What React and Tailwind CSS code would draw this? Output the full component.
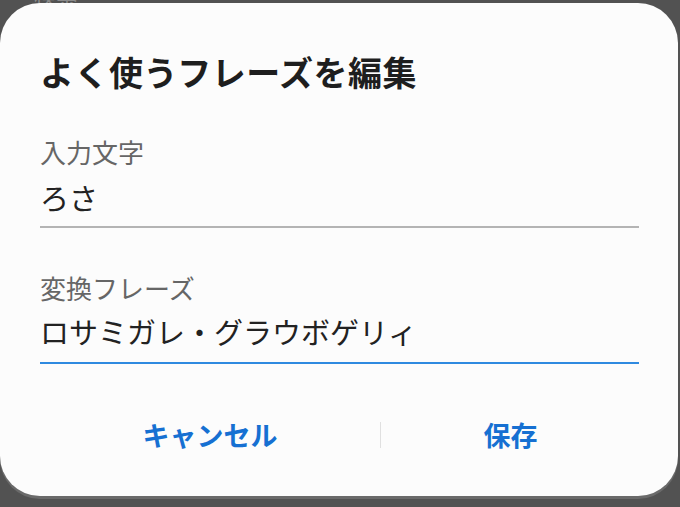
import React from 'react';

const jp = { fontFamily: '"Noto Sans CJK JP", "Noto Sans", sans-serif' };

export default function App() {
    return (
        <div className="relative w-[680px] h-[507px] overflow-hidden bg-[#525252] pt-[3px]" style={jp}>
            {/* 背景の文字 */}
            <div className="absolute left-[34px] top-[-17px] text-[22px] leading-[22px] text-[#8a8a8a]">検索</div>

            <div className="relative w-[678px] h-[493px] rounded-[40px] bg-[#fcfcfc] px-[40px] pt-[49px] shadow-[0_3px_0_#6a6a6a]">
                <h1 className="text-[34px] leading-[40px] font-bold text-[#1e1e1e] tracking-[0.5px]">
                    よく使うフレーズを編集
                </h1>

                {/* 入力文字 */}
                <div className="mt-[44px] w-[599px]">
                    <div className="text-[26px] leading-[32px] text-[#666666]">入力文字</div>
                    <div className="mt-[12px] text-[29px] leading-[34px] text-[#222222]">ろさ</div>
                    <div className="mt-[12px] h-[2px] bg-[#b4b4b4]" />
                </div>

                {/* 変換フレーズ */}
                <div className="mt-[44px] w-[599px]">
                    <div className="text-[26px] leading-[32px] text-[#666666]">変換フレーズ</div>
                    <div className="mt-[10px] text-[29px] leading-[34px] text-[#222222]">ロサミガレ・グラウボゲリィ</div>
                    <div className="mt-[14px] h-[2px] bg-[#2f8ae0]" />
                </div>

                {/* ボタン */}
                <div className="mt-[54px] flex w-[600px] items-center">
                    <button className="w-[340px] text-center text-[27px] leading-[34px] font-bold text-[#1670d2]">キャンセル</button>
                    <div className="h-[26px] w-px bg-[#e0e0e0]" />
                    <button className="flex-1 text-center text-[27px] leading-[34px] font-bold text-[#1670d2]">保存</button>
                </div>
            </div>
        </div>
    );
}
